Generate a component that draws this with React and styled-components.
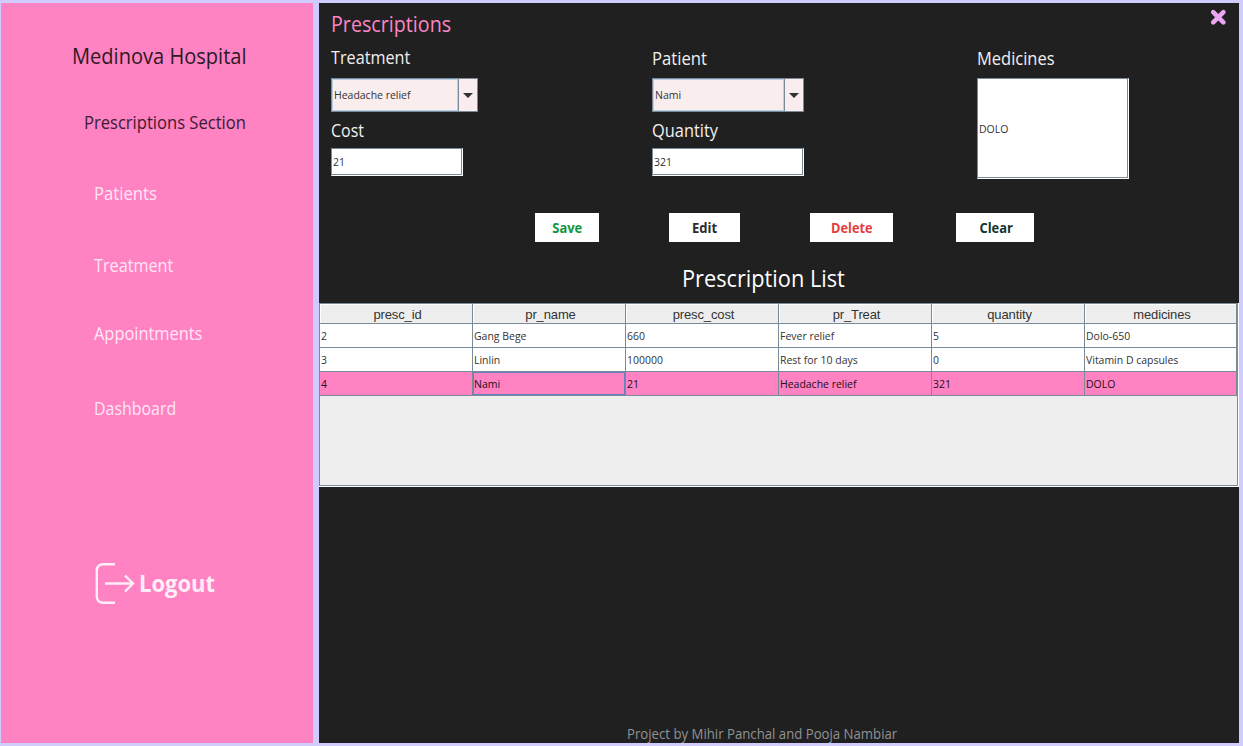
import React from "react";
import styled, { createGlobalStyle, css } from "styled-components";

const Global = createGlobalStyle`
  * { box-sizing: border-box; }
  body { margin: 0; background: #cfcbfd; font-family: "Open Sans", "Noto Sans", sans-serif; }
`;

const Frame = styled.div`
  width: 1243px;
  height: 746px;
  padding: 3px 4px 3px 1px;
  display: flex;
  gap: 6px;
  background: #cfcbfd;
  overflow: hidden;
`;

const Sidebar = styled.nav`
  width: 312px;
  flex: none;
  display: flex;
  flex-direction: column;
  align-items: flex-start;
  background: #ff82c3;
`;

const Main = styled.main`
  width: 920px;
  flex: none;
  display: flex;
  flex-direction: column;
  background: #202020;
`;

/* Condensed text: $sx is the horizontal scale of the glyphs. */
const Text = styled.span`
  display: block;
  width: max-content;
  white-space: pre;
  transform: scaleX(${(p) => p.$sx || 0.91});
  transform-origin: ${(p) => p.$origin || "left"} center;
`;

const Brand = styled.h1`
  margin: 40px 0 0 71px;
  font-size: 22px;
  font-weight: 400;
  line-height: 24px;
  color: #2c1a24;
`;

const SectionName = styled.h2`
  margin: 43px 0 0 83px;
  font-size: 18px;
  font-weight: 400;
  line-height: 24px;
  color: #3c1c30;
`;

const NavItem = styled.a`
  margin: ${(p) => p.$top}px 0 0 93px;
  font-size: 18px;
  line-height: 24px;
  color: #ffe6f5;
`;

const Logout = styled.button`
  margin: 142px 0 0 93px;
  padding: 0;
  height: 42px;
  border: 0;
  display: flex;
  align-items: center;
  gap: 4px;
  background: none;
  font: 700 23px/30px "Open Sans", sans-serif;
  color: #ffeef8;
`;

const TitleBar = styled.header`
  height: 43px;
  padding: 5px 12px 0 12px;
  display: flex;
  justify-content: space-between;
`;

const Title = styled.h2`
  margin: 0;
  font-size: 22px;
  font-weight: 400;
  line-height: 30px;
  color: #fb86c4;
`;

const Form = styled.form`
  height: 167px;
  padding-left: 12px;
  display: grid;
  grid-template-columns: 321px 325px 1fr;
`;

const Field = styled.div`
  display: flex;
  flex-direction: column;
  align-items: flex-start;
  margin-top: -1px;
`;

const Label = styled.label`
  height: ${(p) => p.$h}px;
  padding-top: ${(p) => p.$top}px;
  font-size: 18px;
  line-height: 24px;
  color: #f1efef;
`;

const Combo = styled.div`
  width: ${(p) => p.$w}px;
  height: 34px;
  display: flex;
  border: 1px solid #7a8a99;
  background: #f9eded;
  font-size: 11.5px;
  color: #333;
`;

const ComboValue = styled.div`
  flex: 1;
  padding-left: 1px;
  border: 1px solid #b8cfe5;
  line-height: 30px;
`;

const ComboArrow = styled.div`
  width: 19px;
  border-left: 1px solid #7a8a99;
  display: flex;
  align-items: center;
  justify-content: center;
  &::after {
    content: "";
    border: 5px solid transparent;
    border-top-color: #333;
    border-bottom: 0;
  }
`;

const Input = styled.div`
  width: ${(p) => p.$w}px;
  height: ${(p) => p.$h}px;
  padding: 0 0 ${(p) => p.$pb || 0}px 1px;
  border: 1px solid #7a8a99;
  border-right-color: #fff;
  border-bottom-color: #fff;
  box-shadow: inset -1px -1px 0 #7a8a99;
  background: #fff;
  display: flex;
  align-items: center;
  font-size: 11.5px;
  color: #333;
`;

const Actions = styled.div`
  height: 29px;
  padding-left: 216px;
  display: flex;
  gap: 70px;
`;

const Action = styled.button`
  width: ${(p) => p.$w}px;
  height: 29px;
  margin: 0;
  padding: 0 0 0 ${(p) => p.$pl || 0}px;
  border: 0;
  background: #fff;
  display: flex;
  align-items: center;
  justify-content: center;
  font: 700 14px/29px "Open Sans", sans-serif;
  color: ${(p) => p.$color};
  &:last-child { margin-left: -7px; }
`;

const ListTitle = styled.h3`
  margin: 20px 0 0 363px;
  height: 41px;
  font-size: 23px;
  font-weight: 400;
  line-height: 32px;
  color: #fff;
`;

const Pane = styled.div`
  height: 184px;
  flex: none;
  border-right: 1px solid #fff;
  border-bottom: 1px solid #fff;
`;

const Viewport = styled.div`
  height: 183px;
  border: 1px solid #7a8a99;
  background: #eee;
`;

const Row = styled.div`
  display: grid;
  grid-template-columns: repeat(5, 153px) 152px;
  background: ${(p) => (p.$selected ? "#ff82c3" : "#fff")};
  color: ${(p) => (p.$selected ? "#1c0f16" : "#333")};
`;

const HeadCell = styled.div`
  height: 20px;
  padding-left: 3px;
  border-right: 1px solid #7a8a99;
  border-bottom: 1px solid #7a8a99;
  box-shadow: inset 1px 1px 0 #fff;
  background: #eee;
  text-align: center;
  font: 13px/22px "Liberation Sans", sans-serif;
  letter-spacing: -0.12px;
  color: #333;
`;

const Cell = styled.div`
  height: 24px;
  padding-left: 1px;
  border-right: 1px solid #7a8a99;
  border-bottom: 1px solid #7a8a99;
  font-size: 11.5px;
  line-height: 23px;
  ${(p) => p.$focus && css`box-shadow: inset 0 0 0 1px #6382bf;`}
`;

const Footer = styled.footer`
  margin-top: auto;
  height: 19px;
  padding-left: 308px;
  font-size: 14px;
  line-height: 20px;
  color: #929292;
`;

const columns = ["presc_id", "pr_name", "presc_cost", "pr_Treat", "quantity", "medicines"];
const rows = [
  ["2", "Gang Bege", "660", "Fever relief", "5", "Dolo-650"],
  ["3", "Linlin", "100000", "Rest for 10 days", "0", "Vitamin D capsules"],
  ["4", "Nami", "21", "Headache relief", "321", "DOLO"],
];

export default function App() {
  return (
    <Frame>
      <Global />
      <Sidebar>
        <Brand><Text $sx={0.912}>Medinova Hospital</Text></Brand>
        <SectionName><Text $sx={0.92}>Prescriptions Section</Text></SectionName>
        <NavItem $top={47}><Text $sx={0.925}>Patients</Text></NavItem>
        <NavItem $top={48}><Text $sx={0.9}>Treatment</Text></NavItem>
        <NavItem $top={44}><Text>Appointments</Text></NavItem>
        <NavItem $top={51}><Text $sx={0.885}>Dashboard</Text></NavItem>
        <Logout>
          <svg width="41" height="42" viewBox="0 0 41 42" fill="none" stroke="currentColor" strokeWidth="2.4">
            <path d="M21 2.2H9Q2.8 3 2.8 8.5V34.5Q2.8 40 9 40.8H21" />
            <path d="M11 21.5H39M31 13.5L39 21.5L31 29.5" />
          </svg>
          <Text $sx={0.955}>Logout</Text>
        </Logout>
      </Sidebar>
      <Main>
        <TitleBar>
          <Title><Text $sx={0.895}>Prescriptions</Text></Title>
          <svg width="18" height="18" viewBox="0 0 18 18" stroke="#eba5f3" strokeWidth="4.6" strokeLinecap="round">
            <path d="M4.2 4.2L14.4 14.4M14.4 4.2L4.2 14.4" />
          </svg>
        </TitleBar>
        <Form>
          <Field>
            <Label $h={33}><Text $sx={0.9}>Treatment</Text></Label>
            <Combo $w={147}><ComboValue><Text>Headache relief</Text></ComboValue><ComboArrow /></Combo>
            <Label $h={36} $top={6}><Text $sx={0.89}>Cost</Text></Label>
            <Input $w={132} $h={28} $pb={2}><Text>21</Text></Input>
          </Field>
          <Field>
            <Label $h={33} $top={1}><Text $sx={0.925}>Patient</Text></Label>
            <Combo $w={152}><ComboValue><Text>Nami</Text></ComboValue><ComboArrow /></Combo>
            <Label $h={36} $top={6}><Text>Quantity</Text></Label>
            <Input $w={152} $h={28} $pb={2}><Text>321</Text></Input>
          </Field>
          <Field>
            <Label $h={33} $top={1}><Text $sx={0.915}>Medicines</Text></Label>
            <Input $w={152} $h={101}><Text>DOLO</Text></Input>
          </Field>
        </Form>
        <Actions>
          <Action $w={64} $color="#0f9540"><Text $sx={0.92} $origin="center">Save</Text></Action>
          <Action $w={71} $color="#2b2b2b"><Text $sx={0.93} $origin="center">Edit</Text></Action>
          <Action $w={83} $color="#e63c3c"><Text $sx={0.91} $origin="center">Delete</Text></Action>
          <Action $w={78} $pl={2} $color="#12342e"><Text $sx={0.92} $origin="center">Clear</Text></Action>
        </Actions>
        <ListTitle><Text $sx={0.945}>Prescription List</Text></ListTitle>
        <Pane>
          <Viewport>
            <Row>{columns.map((c) => <HeadCell key={c}>{c}</HeadCell>)}</Row>
            {rows.map((r, i) => (
              <Row key={r[0]} $selected={i === 2}>
                {r.map((v, j) => <Cell key={j} $focus={i === 2 && j === 1}><Text>{v}</Text></Cell>)}
              </Row>
            ))}
          </Viewport>
        </Pane>
        <Footer><Text $sx={0.942}>Project by Mihir Panchal and Pooja Nambiar</Text></Footer>
      </Main>
    </Frame>
  );
}
